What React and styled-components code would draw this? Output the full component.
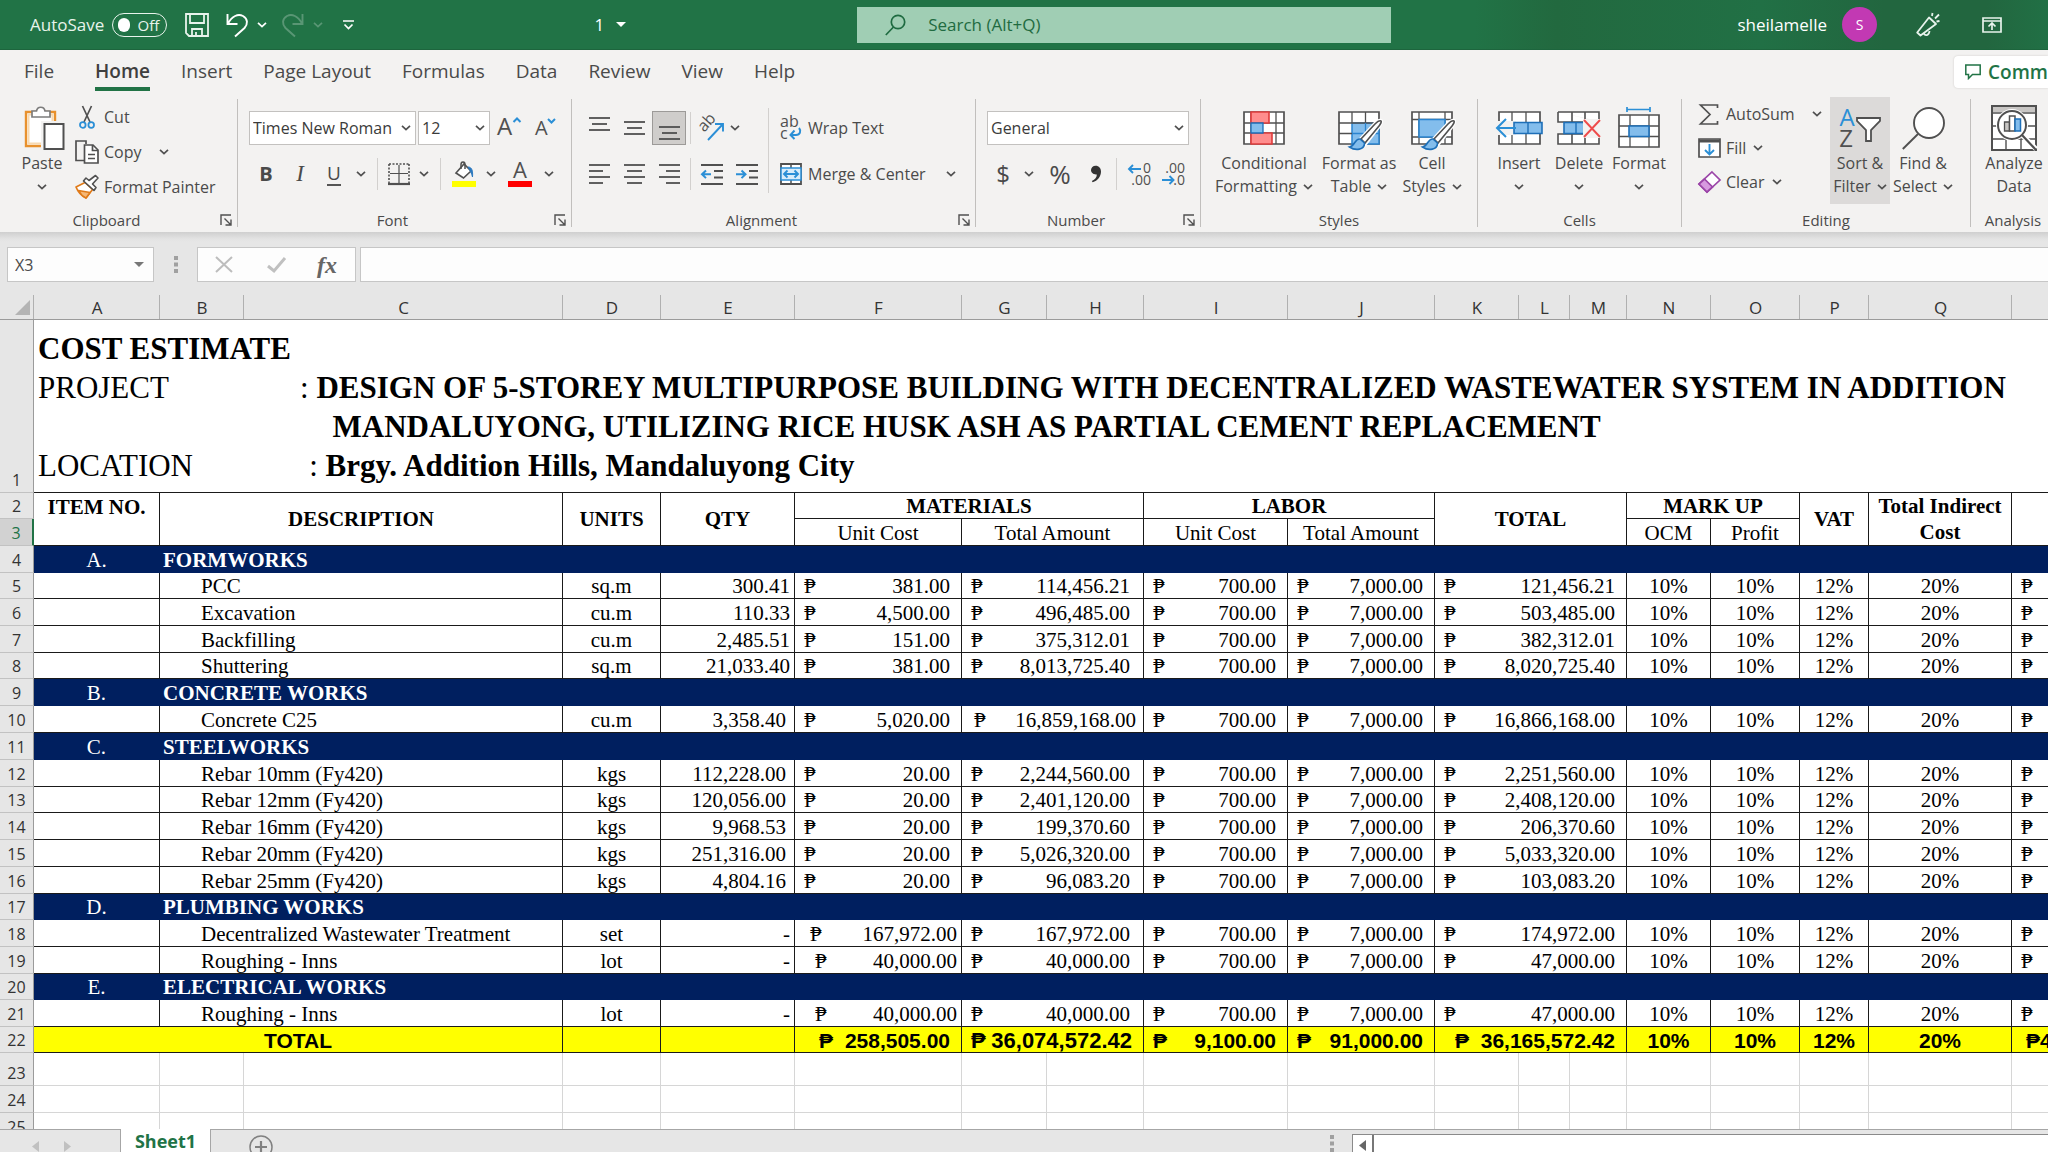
import React from 'react';
import styled, { createGlobalStyle, css } from 'styled-components';

const ui = '"Open Sans", "Noto Sans", sans-serif';
const serif = '"Liberation Serif", "Times New Roman", serif';
const sans = '"Liberation Sans", Arial, sans-serif';

const GlobalStyle = createGlobalStyle`
  *, *::before, *::after { box-sizing: border-box; }
  body { margin: 0; background: #e6e6e6; font-family: ${ui}; color: #4a4a4a; }
  button, input, select { font: inherit; color: inherit; margin: 0; padding: 0; border: 0; background: none; }
  svg { display: block; flex: none; overflow: visible; }
`;

const Page = styled.div`
  display: flex;
  flex-direction: column;
  height: 100vh;
  overflow: hidden;
`;

/* ---------- title bar ---------- */

const TitleBar = styled.header`
  flex: none;
  display: grid;
  grid-template-columns: 42% 26% 1fr;
  align-items: center;
  height: 50px;
  background: linear-gradient(90deg, #217346 72%, #22693f 76%, #217045 86%, #22663f 92%, #22663f 97%, #217045 100%);
  border-bottom: 1px solid #1d653d;
  color: #fff;
  font-size: 17px;
`;

const QuickAccess = styled.div`
  display: flex;
  align-items: center;
  padding-left: 30px;
`;

const SwitchLabel = styled.label`
  display: flex;
  align-items: center;
  gap: 8px;
  color: #e8f3ec;
`;

const Switch = styled.span`
  display: grid;
  align-items: center;
  width: 55px;
  height: 24px;
  border: 1px solid #e8f3ec;
  border-radius: 12px;
  font-size: 15px;
  line-height: 20px;
  > * { grid-area: 1 / 1; }
  span { justify-self: end; padding-right: 7px; }
  input {
    appearance: none;
    width: 12px;
    height: 14px;
    margin-left: 5px;
    border-radius: 7px;
    background: #fff;
  }
`;

const BarButton = styled.button`
  display: flex;
  align-items: center;
  justify-content: center;
  width: ${(p) => p.$w}px;
  height: 36px;
  opacity: ${(p) => (p.$dim ? 0.25 : 1)};
`;

const DocName = styled.button`
  display: flex;
  align-items: center;
  gap: 12px;
  margin-left: auto;
  margin-right: 234px;
`;

const SearchBox = styled.label`
  display: flex;
  align-items: center;
  gap: 22px;
  height: 36px;
  margin: 0 2px 0 -3px;
  padding-left: 28px;
  background: #a0ceb4;
  color: #1f6b41;
  input { flex: 1; min-width: 0; outline: 0; }
  input::placeholder { color: #1f6b41; opacity: 1; }
`;

const Account = styled.div`
  display: flex;
  align-items: center;
  justify-content: flex-end;
  padding-right: 17px;
`;

const UserName = styled.span`
  margin-right: 15px;
`;

const Avatar = styled.span`
  width: 35px;
  height: 35px;
  margin-right: 26px;
  border-radius: 50%;
  background: #c239b3;
  font-size: 14px;
  line-height: 35px;
  text-align: center;
`;

/* ---------- ribbon ---------- */

const TabBar = styled.nav`
  flex: none;
  display: flex;
  align-items: flex-start;
  height: 47px;
  padding-left: 24px;
  background: #f3f2f1;
  font-size: 19px;
  overflow: hidden;
`;

const Tab = styled.button`
  height: 41px;
  padding: 4px 0 0;
  margin-right: ${(p) => (p.$first ? 41 : 31)}px;
  line-height: 33px;
  white-space: nowrap;
  border-bottom: 4px solid transparent;
  ${(p) => p.$active && css`
    font-weight: 600;
    color: #3f3f3f;
    border-bottom-color: #217346;
  `}
`;

const TabText = styled.span`
  display: block;
  padding-top: 2px;
  line-height: 31px;
`;

const Comments = styled.button`
  display: flex;
  flex: none;
  align-items: center;
  gap: 7px;
  width: 94px;
  height: 32px;
  margin-top: 6px;
  margin-left: auto;
  padding-left: 11px;
  border-radius: 4px 0 0 4px;
  background: #fff;
  box-shadow: 0 0 2px #c8c6c4;
  color: #217346;
  font-weight: 600;
  overflow: hidden;
`;

const Ribbon = styled.section`
  flex: none;
  display: flex;
  height: 135px;
  padding-bottom: 5px;
  background: #f3f2f1;
  font-size: 16px;
  overflow: hidden;
`;

const GroupBox = styled.div`
  flex: none;
  display: flex;
  flex-direction: column;
  width: ${(p) => p.$w}px;
`;

const Divider = styled.div`
  flex: none;
  width: 1px;
  margin-top: 2px;
  background: #c1bfbd;
`;

const GroupBody = styled.div`
  flex: 1;
  display: flex;
  align-items: flex-start;
  padding-left: ${(p) => p.$left}px;
`;

const GroupFoot = styled.div`
  display: flex;
  font-size: 15px;
  line-height: 14px;
  text-align: center;
  > span { flex: 1; }
`;

const Launcher = styled.button`
  display: flex;
  align-items: center;
  width: 24px;
  padding-left: 7px;
`;

const Stack = styled.div`
  display: flex;
  flex-direction: column;
  gap: ${(p) => p.$gap || 0}px;
  padding-top: ${(p) => p.$top || 0}px;
  padding-left: ${(p) => p.$left || 0}px;
  width: ${(p) => (p.$w ? p.$w + 'px' : 'auto')};
`;

const Tools = styled.div`
  display: flex;
  align-items: center;
  gap: ${(p) => p.$gap || 0}px;
  height: 34px;
`;

const Tool = styled.button`
  display: flex;
  align-items: center;
  justify-content: center;
  width: ${(p) => p.$w || 34}px;
  height: 34px;
  ${(p) => p.$pressed && css`
    background: #cfcdcb;
    box-shadow: inset 0 0 0 1px #9c9a98;
  `}
`;

const Glyph = styled.span`
  font-family: ${(p) => p.$font || ui};
  font-size: ${(p) => p.$size || 20}px;
  font-weight: ${(p) => p.$weight || 400};
  font-style: ${(p) => (p.$italic ? 'italic' : 'normal')};
  border-bottom: ${(p) => (p.$under ? '2px solid #555' : '0')};
  line-height: 22px;
`;

const Rule = styled.div`
  width: 1px;
  height: ${(p) => p.$h || 32}px;
  margin: ${(p) => p.$top || 0}px ${(p) => p.$m}px 0;
  background: #d2d0ce;
`;

const TextTool = styled.button`
  display: flex;
  align-items: center;
  gap: 5px;
  height: 34px;
  white-space: nowrap;
  > svg { margin-left: ${(p) => p.$push || 2}px; }
`;

const IconSlot = styled.span`
  display: flex;
  justify-content: center;
  width: 24px;
`;

const BigTool = styled.button`
  display: flex;
  flex-direction: column;
  align-items: center;
  width: ${(p) => p.$w}px;
  height: 107px;
  padding-top: 6px;
  line-height: 23px;
  white-space: nowrap;
  background: ${(p) => (p.$hover ? '#dcdad9' : 'none')};
  margin-right: ${(p) => (p.$hover ? 3 : 0)}px;
`;

const BigIcon = styled.span`
  display: flex;
  align-items: center;
  height: 49px;
`;

const BigLine = styled.span`
  display: flex;
  align-items: center;
  gap: 6px;
  height: 23px;
`;

const SelectBox = styled.div`
  display: grid;
  align-items: center;
  width: ${(p) => p.$w}px;
  height: 34px;
  border: 1px solid #c3c1bf;
  background: #fff;
  color: #3b3b3b;
  > * { grid-area: 1 / 1; }
  select { appearance: none; width: 100%; height: 32px; padding-left: 3px; outline: 0; }
  svg { justify-self: end; margin-right: 4px; pointer-events: none; }
`;

/* ---------- formula bar ---------- */

const FormulaBar = styled.section`
  flex: none;
  display: flex;
  height: 51px;
  padding: 15px 0 1px 7px;
  background: linear-gradient(#cfcfcf, #e3e3e3 7px, #e6e6e6 10px);
  font-size: 16px;
`;

const Field = styled.div`
  display: flex;
  align-items: center;
  width: ${(p) => (p.$w ? p.$w + 'px' : 'auto')};
  flex: ${(p) => (p.$w ? 'none' : '1')};
  margin-right: ${(p) => p.$gap || 0}px;
  border: solid #c6c6c6;
  border-width: ${(p) => (p.$open ? '1px 0 1px 1px' : '1px')};
  background: #fdfdfd;
  input { flex: 1; min-width: 0; height: 33px; padding-left: 7px; outline: 0; }
`;

const Grip = styled.div`
  display: flex;
  align-items: center;
  justify-content: center;
  width: 43px;
`;

const FieldButton = styled.button`
  display: flex;
  align-items: center;
  justify-content: center;
  width: ${(p) => p.$w}px;
  height: 33px;
  color: #666;
`;

/* ---------- sheet ---------- */

const SheetArea = styled.main`
  flex: 1;
  min-height: 0;
  overflow: hidden;
  background: #fff;
`;

const Sheet = styled.table`
  width: 100%;
  min-width: 2110px;
  table-layout: fixed;
  border-collapse: separate;
  border-spacing: 0;
  color: #000;
  font-family: ${serif};
  font-size: 21px;
  line-height: 23px;
`;

const SheetRow = styled.tr`
  height: ${(p) => p.$h}px;
`;

const ColHead = styled.th`
  height: 37px;
  padding: 12px 0 0;
  border-bottom: 1px solid #9b9b9b;
  background: linear-gradient(#b0b0b0, #b0b0b0) right bottom / 1px 24px no-repeat #e6e6e6;
  color: #333;
  font-family: ${ui};
  font-size: 17px;
  font-weight: 400;
`;

const Corner = styled(ColHead)`
  vertical-align: bottom;
  svg { margin: 0 0 4px 15px; }
`;

const RowHead = styled.th`
  padding: 0;
  border-right: ${(p) => (p.$on ? '2px solid #217346' : '1px solid #9b9b9b')};
  border-bottom: 1px solid #c2c2c2;
  background: ${(p) => (p.$on ? '#d2d2d2' : '#e6e6e6')};
  color: ${(p) => (p.$on ? '#217346' : '#333')};
  font-family: ${ui};
  font-size: 16px;
  font-weight: 400;
  text-align: center;
  vertical-align: bottom;
`;

const Cell = styled.td`
  padding: 0 ${(p) => p.$r || 0}px 0 ${(p) => p.$l || 0}px;
  border-right: 1px solid #1a1a1a;
  border-bottom: 1px solid #1a1a1a;
  text-align: ${(p) => p.$align || 'center'};
  vertical-align: bottom;
  white-space: nowrap;
  overflow: hidden;
`;

const HeadCell = styled(Cell).attrs({ as: 'th' })`
  padding: ${(p) => (p.$v === 'top' ? 3 : 0)}px 0 0;
  font-weight: ${(p) => (p.$plain ? 400 : 700)};
  vertical-align: ${(p) => p.$v || 'middle'};
  line-height: ${(p) => (p.$tall ? 26 : 23)}px;
`;

const SectionCell = styled(Cell)`
  border-color: #001f5f;
  background: #001f5f;
  color: #fff;
  font-weight: ${(p) => (p.$bold ? 700 : 400)};
`;

const TotalCell = styled(Cell)`
  background: #ff0;
  font-family: ${sans};
  font-size: ${(p) => (p.$big ? 22 : 21)}px;
  font-weight: 700;
`;

const BlankCell = styled.td`
  padding: 0;
  border-right: 1px solid #d6d6d6;
  border-bottom: 1px solid #d6d6d6;
`;

const TitleCell = styled(Cell)`
  padding: 9px 0 0 4px;
  text-align: left;
  vertical-align: top;
  font-size: 31px;
  line-height: 39px;
`;

const TitleLine = styled.div`
  white-space: pre;
`;

const Money = styled.div`
  display: flex;
  justify-content: space-between;
`;

/* ---------- bottom bar ---------- */

const BottomBar = styled.footer`
  flex: none;
  display: flex;
  align-items: flex-start;
  height: 23px;
  border-top: 1px solid #a6a6a6;
  background: #e6e6e6;
`;

const SheetNav = styled.div`
  display: flex;
  width: 120px;
  height: 22px;
  gap: 24px;
  padding: 10px 0 0 32px;
  button { width: 8px; height: 12px; }
`;

const SheetTab = styled.button`
  width: 91px;
  height: 23px;
  margin-top: -1px;
  border: solid #a6a6a6;
  border-width: 0 1px;
  background: #fff;
  color: #217346;
  font-size: 18px;
  font-weight: 700;
  line-height: 22px;
`;

const AddSheet = styled.button`
  margin: 5px 0 0 38px;
  height: 17px;
  overflow: hidden;
`;

const ScrollGrip = styled.div`
  margin-left: auto;
  padding-top: 5px;
`;

const ScrollBar = styled.div`
  display: flex;
  width: 34%;
  height: 18px;
  margin: 4px 0 0 18px;
  border: solid #8a8a8a;
  border-width: 1px 0 0 1px;
  background: #fff;
  button {
    width: 21px;
    border-right: 2px solid #777;
    padding: 5px 0 0 6px;
    display: flex;
  }
`;

/* ---------- icons ---------- */

const G = '#505050';
const B = '#2b8fd6';

const Chevron = ({ color = G }) => (
  <svg width="10" height="6" viewBox="0 0 10 6" fill="none" stroke={color} strokeWidth="1.7"><path d="M1 .8 5 4.6 9 .8" /></svg>
);

const Drop = ({ w = 20, label }) => (
  <Tool $w={w} aria-label={label}><Chevron /></Tool>
);

const SaveIcon = () => (
  <svg width="24" height="24" viewBox="0 0 24 24" fill="none" stroke="#e8f3ec" strokeWidth="1.8">
    <path d="M1 1h22v22H4l-3-3zM5 1v9h14V1M7 23v-7h10v7M11 19v4" />
  </svg>
);

const UndoIcon = ({ flip }) => (
  <svg width="22" height="24" viewBox="0 0 22 24" fill="none" stroke="#fff" strokeWidth="1.9">
    <g transform={flip ? 'matrix(-1 0 0 1 22 0)' : undefined}>
      <path d="M1.5 1v10h10M2 10.5C6 3 12 .5 17 3c5 3 5 8 1.500 12L9 23.500" />
    </g>
  </svg>
);

const MoreIcon = () => (
  <svg width="11" height="10" viewBox="0 0 11 10" fill="none" stroke="#fff" strokeWidth="1.7"><path d="M0 1h11M1.500 4.500l4 4 4-4" /></svg>
);

const SearchIcon = () => (
  <svg width="21" height="22" viewBox="0 0 21 22" fill="none" stroke="#1f6b41" strokeWidth="1.700"><circle cx="13" cy="8" r="6.700" /><path d="M8.500 13 .8 21" /></svg>
);

const MegaphoneIcon = () => (
  <svg width="24" height="24" viewBox="0 0 24 24" fill="none" stroke="#e8f3ec" strokeWidth="1.800" strokeLinejoin="round">
    <path d="M13 4.500 1.200 19.500 4.500 22.500 20 11zM1.200 19.500l3.300 3M8 20.500c1 2.500 5 2.500 5.500-2.500M16 3l.5-3M19 5.500l4-4M20.500 8.500l3-.5" />
  </svg>
);

const RibbonModeIcon = () => (
  <svg width="20" height="16" viewBox="0 0 20 16" fill="none" stroke="#e8f3ec" strokeWidth="1.700">
    <path d="M1 1h18v14H1zM1 4h18M10 13V6.500M6.500 9.500 10 6l3.500 3.500" />
  </svg>
);

const CommentIcon = () => (
  <svg width="16" height="16" viewBox="0 0 16 16" fill="none" stroke="#217346" strokeWidth="1.500"><path d="M.8 1h14.400v9.500H7.500L3.500 14.500v-4H.8z" /></svg>
);

const LaunchIcon = () => (
  <svg width="12" height="12" viewBox="0 0 12 12" fill="none" stroke={G} strokeWidth="1.400"><path d="M1 11V1h10M4.500 4.500 11 11M11 5.500V11H5.500" /></svg>
);

const PasteIcon = () => (
  <svg width="48" height="44" viewBox="-6 0 48 44" fill="none">
    <path d="M2 6h29v34H2z" fill="#fff" stroke="#e8912d" strokeWidth="2.400" />
    <path d="M4.500 8.500h24v29h-24z" stroke="#f8d9b0" strokeWidth="2" />
    <path d="M8 11V5h4.500c1-5 7.500-5 8.500 0H26v6z" fill="#fff" stroke="#7c7c7c" strokeWidth="1.700" />
    <path d="M17 15h24v29H17z" fill="#f3f2f1" />
    <path d="M20.500 18h19v25h-19z" fill="#fff" stroke="#505050" strokeWidth="2" />
  </svg>
);

const CutIcon = () => (
  <svg width="16" height="23" viewBox="0 0 16 23" fill="none">
    <path d="M3.500 0 11 16M12.500 0 5 16" stroke={G} strokeWidth="1.700" />
    <circle cx="3.800" cy="19" r="2.800" stroke={B} strokeWidth="1.800" /><circle cx="12.200" cy="19" r="2.800" stroke={B} strokeWidth="1.800" />
  </svg>
);

const CopyIcon = () => (
  <svg width="24" height="24" viewBox="0 0 24 24" fill="none" stroke={G} strokeWidth="1.700">
    <path d="M9 20.500H1V1h10v3" /><path d="M9.500 5H18l5 5v13H9.500z" fill="#fff" /><path d="M17.500 5v5.500H23M13 14.500h7M13 18.500h7" />
  </svg>
);

const PainterIcon = () => (
  <svg width="24" height="24" viewBox="0 0 24 24" fill="none" strokeLinejoin="round">
    <path d="M1 12 10 7.500l7.500 7L11 23C6.500 21 3 17 1 12z" fill="#fff" stroke="#e07b1a" strokeWidth="1.700" />
    <path d="M3.500 15.500 15 17.500 11 23C8 21.500 5.500 19 3.500 15.500z" fill="#f5b877" stroke="#e07b1a" strokeWidth="1.500" />
    <path d="m8.500 6 10.500 9.500 2-3-3.500-3.500L23 3l-2.500-2.500-6.500 5L11 3z" fill="#fff" stroke={G} strokeWidth="1.600" />
  </svg>
);

const GrowIcon = ({ shrink }) => (
  <svg width="24" height="24" viewBox="0 0 24 24">
    <text x={shrink ? 2 : 0} y="19" fontFamily={ui} fontSize={shrink ? 20 : 24} fill={G}>A</text>
    <path d={shrink ? 'M15 3l3.500 3.500L22 3' : 'M16.500 6 20 2.500 23.500 6'} fill="none" stroke={B} strokeWidth="2" />
  </svg>
);

const BorderIcon = () => (
  <svg width="22" height="22" viewBox="0 0 22 22" fill="none" stroke={G}>
    <path d="M1 1h20M1 1v19M21 1v19" strokeWidth="1.600" strokeDasharray="2 1.500" />
    <path d="M11 2v18M2 10.500h18" strokeWidth="1.200" /><path d="M0 21h22" strokeWidth="2.200" />
  </svg>
);

const FillColorIcon = () => (
  <svg width="24" height="26" viewBox="0 0 24 26" fill="none">
    <path d="m4 12 8-9 7 7-7.500 7z" fill="#fff" stroke={G} strokeWidth="1.600" /><path d="M9 8V3.500C9 0 13 0 13 3.500V8" stroke={G} strokeWidth="1.500" />
    <path d="M16 6c4 0 5 4 4.500 10-1-4-2-6-4.500-10z" fill="#2a78bf" stroke="#2a78bf" /><path d="M0 20h24v6H0z" fill="#ff0" />
  </svg>
);

const FontColorIcon = () => (
  <svg width="24" height="26" viewBox="0 0 24 26"><text x="12" y="17" textAnchor="middle" fontFamily={ui} fontSize="22" fill={G}>A</text><path d="M0 20h24v6H0z" fill="#f00" /></svg>
);

const Lines = ({ rows, y = 0, step = 6 }) => (
  <svg width="21" height="22" viewBox="0 0 21 22" stroke={G} strokeWidth="1.800">
    {rows.map(([a, b], i) => <path key={i} d={`M${a} ${y + 2 + i * step}H${b}`} />)}
  </svg>
);

const IndentIcon = ({ dir }) => (
  <svg width="22" height="21" viewBox="0 0 22 21" fill="none" stroke={G} strokeWidth="1.800">
    <path d="M0 1h22M13 7h9M13 13.500h9M0 20h22" />
    <path d={dir === 'in' ? 'M0 10.300h9M5.500 6.500l4 3.800-4 3.800' : 'M1 10.300h9M5 6.500l-4 3.800 4 3.800'} stroke={B} strokeWidth="2" />
  </svg>
);

const OrientIcon = () => (
  <svg width="24" height="26" viewBox="0 0 24 26">
    <text x="2" y="17" transform="rotate(-48 4 15)" fontFamily={ui} fontSize="16" fill={G}>ab</text>
    <path d="M8 25 22.500 9.500M15 9h8v7.500" fill="none" stroke={B} strokeWidth="1.900" />
  </svg>
);

const WrapIcon = () => (
  <svg width="22" height="24" viewBox="0 0 22 24">
    <text x="0" y="11" fontFamily={ui} fontSize="16" fill={G}>ab</text><text x="0" y="23" fontFamily={ui} fontSize="16" fill={G}>c</text>
    <path d="M19 12c2.500 3 1 7-3 7h-5M14.500 14.500 10.500 19l4 4" fill="none" stroke={B} strokeWidth="2" />
  </svg>
);

const MergeIcon = () => (
  <svg width="22" height="22" viewBox="0 0 22 22" fill="none">
    <path d="M1 1h20v20H1z" fill="#fff" stroke={G} strokeWidth="1.800" /><path d="M11 1v4M11 17v4" stroke={G} strokeWidth="1.500" />
    <path d="M1 5h20v12H1z" fill="#d9ecfa" stroke={B} strokeWidth="1.500" /><path d="M4 11h14M7.500 7.500 4 11l3.500 3.500M14.500 7.500 18 11l-3.500 3.500" stroke={B} strokeWidth="1.900" />
  </svg>
);

const CommaIcon = () => (
  <svg width="10" height="18" viewBox="0 0 12 20" fill="#333"><path d="M5.500 0C9.500 0 12 3 12 7c0 6-4 11-10 13l-1-1.500C5 16.500 7 14 7 10.500 3 11 0 8.500 0 5.300 0 2.200 2.500 0 5.500 0z" /></svg>
);

const DecimalIcon = ({ less }) => (
  <svg width="23" height="24" viewBox="0 0 23 24" fill="none">
    <text x="23" y="11" textAnchor="end" fontFamily={ui} fontSize="14" fill={G}>{less ? '.00' : '0'}</text>
    <text x="23" y="23" textAnchor="end" fontFamily={ui} fontSize="14" fill={G}>{less ? '.0' : '.00'}</text>
    <path d={less ? 'M0 18h11M7.500 14l4 4-4 4' : 'M1 7h12M5 3 1 7l4 4'} stroke={B} strokeWidth="1.900" />
  </svg>
);

const BLUE = '#83bdec';
const Brush = () => (
  <g>
    <path d="M43 10c-2-1-4 1-6 3L23 28l4 5 14-18c2-3 3-4 2-5z" fill="#fff" stroke="#fff" strokeWidth="4" />
    <path d="M43 10c-2-1-4 1-6 3L23 28l4 4 14-17c2-3 3-4 2-5z" fill="#fff" stroke={G} strokeWidth="1.600" />
    <path d="M22 28c-5-1-5 7-10.500 8 6 4 15 3 15-4z" fill={BLUE} stroke="#1d6fb8" strokeWidth="1.600" />
  </g>
);

const CondIcon = () => (
  <svg width="42" height="34" viewBox="0 0 42 34" fill="none">
    <path d="M1 1h40v32H1z" fill="#fff" stroke={G} strokeWidth="1.700" /><path d="M8 1v32M33 1v32M1 12h40M1 22h40" stroke={G} strokeWidth="1.300" />
    <path d="M8 1h18v11H8zM8 22h21v11H8z" fill="#ff8d8d" stroke="#e03c3c" strokeWidth="1.600" /><path d="M8 12h12v10H8z" fill={BLUE} stroke="#1d6fb8" strokeWidth="1.300" />
  </svg>
);

const TableIcon = () => (
  <svg width="42" height="34" viewBox="0 0 42 34" fill="none">
    <path d="M1 1h40v32H1z" fill="#fff" stroke={G} strokeWidth="1.700" /><path d="M14 12h27v21H14z" fill={BLUE} />
    <path d="M14 12v21h27V12z" stroke="#2a84cf" strokeWidth="1.500" /><path d="M14 1v11M27.500 1v11M1 12h40M1 22.500h13" stroke={G} strokeWidth="1.300" /><path d="M27.500 12v21M14 22.500h27" stroke="#2a84cf" strokeWidth="1.300" />
    <Brush />
  </svg>
);

const CellIcon = () => (
  <svg width="42" height="34" viewBox="0 0 42 34" fill="none">
    <path d="M1 1h40v32H1z" fill="#fff" stroke={G} strokeWidth="1.700" /><path d="M8 1v32M34 1v32M1 8.500h40M1 26h40" stroke={G} strokeWidth="1.300" />
    <path d="M8 8.500h26V26H8z" fill={BLUE} stroke="#2a84cf" strokeWidth="1.600" /><Brush />
  </svg>
);

const InsertIcon = () => (
  <svg width="46" height="34" viewBox="0 0 46 34" fill="none">
    <path d="M3 1h41v32H3z" fill="#fff" stroke={G} strokeWidth="1.700" /><path d="M16 1v32M30 1v32" stroke={G} strokeWidth="1.300" />
    <path d="M0 10h20v14H0z" fill="#f3f2f1" /><path d="M18 11.500h28v11H18z" fill={BLUE} stroke="#1d6fb8" strokeWidth="1.600" /><path d="M32 11.500v11" stroke="#1d6fb8" strokeWidth="1.400" />
    <path d="M1 17h19M10 8 1 17l9 9" stroke={B} strokeWidth="2" />
  </svg>
);

const DeleteIcon = () => (
  <svg width="44" height="34" viewBox="0 0 44 34" fill="none">
    <path d="M1 1h41v9M1 1v10h41M1 33V23h41v10zM15 1v10M28 1v10M15 23v10M28 23v10" fill="#fff" stroke={G} strokeWidth="1.600" />
    <path d="M7 11.500h22v11H7z" fill={BLUE} stroke="#1d6fb8" strokeWidth="1.600" /><path d="M19 11.500v11" stroke="#1d6fb8" strokeWidth="1.400" />
    <path d="M26 8h18v19H26z" fill="#f3f2f1" /><path d="m27 9 16 17M43 9 27 26" stroke="#ee4b4b" strokeWidth="1.900" />
  </svg>
);

const FormatIcon = () => (
  <svg width="42" height="42" viewBox="0 0 42 42" fill="none">
    <path d="M9 0v5M32 0v5M9 2.500h23" stroke={B} strokeWidth="1.700" />
    <path d="M1 8h40v32H1z" fill="#fff" stroke={G} strokeWidth="1.700" /><path d="M12 8v32M31 8v32M1 19h40M1 29.500h40" stroke={G} strokeWidth="1.300" />
    <path d="M11 19h20v10.500H11z" fill={BLUE} stroke="#1d6fb8" strokeWidth="1.600" />
  </svg>
);

const SigmaIcon = () => (
  <svg width="20" height="21" viewBox="0 0 20 21" fill="none" stroke={G} strokeWidth="1.700"><path d="M18.500 4V1H1.500L11 10.500 1.500 20h17v-3" /></svg>
);

const FillIcon = () => (
  <svg width="23" height="20" viewBox="0 0 23 20" fill="none"><path d="M1 1h21v18H1z" fill="#fff" stroke={G} strokeWidth="1.700" /><path d="M1 3h21" stroke={G} strokeWidth="3" /><path d="M11.500 6v10.500M7 12l4.500 4.500L16 12" stroke={B} strokeWidth="1.900" /></svg>
);

const EraserIcon = () => (
  <svg width="23" height="22" viewBox="0 0 23 22" fill="none" stroke="#9b45a8" strokeWidth="1.700"><path d="M14 1 22 9 9 21 1 13z" fill="#fff" /><path d="m6.500 8 8 8L9 21 1 13z" fill="#d79ae0" /></svg>
);

const SortIcon = () => (
  <svg width="42" height="44" viewBox="0 0 42 44" fill="none">
    <text x="8" y="20" textAnchor="middle" fontFamily={ui} fontSize="24" fill={B}>A</text>
    <text x="7" y="41" textAnchor="middle" fontFamily={ui} fontSize="24" fill={G}>Z</text>
    <path d="M18 12h23v3l-9 9v11h-5V24l-9-9z" fill="#fff" stroke={G} strokeWidth="1.800" />
  </svg>
);

const FindIcon = () => (
  <svg width="43" height="44" viewBox="0 0 43 44" fill="none" stroke={G} strokeWidth="1.900"><circle cx="27" cy="17" r="15" fill="#fff" /><path d="M16 28 .8 43" /></svg>
);

const AnalyzeIcon = () => (
  <svg width="46" height="46" viewBox="0 0 46 46" fill="none">
    <path d="M1 1h44v44H1z" fill="#fff" stroke={G} strokeWidth="2" /><path d="M2 2h42v5H2z" fill="#c8c6c4" />
    <path d="M1 8h44M1 21h44M1 34h44M15 34v11M30 34v11" stroke={G} strokeWidth="1.400" />
    <circle cx="21" cy="20" r="16" fill="#fff" /><path d="m32 31 13 13" stroke="#fff" strokeWidth="5" />
    <circle cx="21" cy="20" r="14" fill="#fff" stroke={G} strokeWidth="2" /><path d="m31 30 14 15" stroke={G} strokeWidth="2.200" />
    <path d="M13.500 17h5v9h-5z" fill="#c8c6c4" stroke={G} strokeWidth="1.300" /><path d="M18.500 11h5.500v15h-5.500z" fill="#fff" stroke={G} strokeWidth="1.500" /><path d="M24 14h5.500v12H24z" fill={BLUE} stroke="#1d6fb8" strokeWidth="1.500" />
  </svg>
);

const Dots = () => (
  <svg width="4" height="17" viewBox="0 0 4 17" fill="#a0a0a0"><path d="M0 0h4v4H0zM0 6.500h4v4H0zM0 13h4v4H0z" /></svg>
);

const Triangle = ({ dir, color }) => {
  const d = { down: 'M0 0h10L5 5z', left: 'M7 0v11L0 5.500z', right: 'M0 0v11l7-5.500z' }[dir];
  return <svg width={dir === 'down' ? 10 : 8} height={dir === 'down' ? 5 : 11} fill={color}><path d={d} /></svg>;
};

/* ---------- ribbon parts ---------- */

const Group = ({ w, label, left, launcher, children }) => (
  <>
    <GroupBox $w={w} role="group" aria-label={label}>
      <GroupBody $left={left}>{children}</GroupBody>
      <GroupFoot><span>{label}</span>{launcher && <Launcher aria-label={`${label} settings`}><LaunchIcon /></Launcher>}</GroupFoot>
    </GroupBox>
    <Divider />
  </>
);

const Big = ({ w, icon, top, bottom, drop, hover }) => (
  <BigTool $w={w} $hover={hover}>
    <BigIcon>{icon}</BigIcon>
    <BigLine>{top}</BigLine>
    <BigLine>{bottom}{drop && <Chevron />}</BigLine>
  </BigTool>
);

const Select = ({ w, label, value }) => (
  <SelectBox $w={w}>
    <select aria-label={label} defaultValue={value}><option>{value}</option></select>
    <Chevron />
  </SelectBox>
);

const TABS = ['File', 'Home', 'Insert', 'Page Layout', 'Formulas', 'Data', 'Review', 'View', 'Help'];

/* ---------- sheet data ---------- */

const COLUMNS = [
  ['A', 126], ['B', 84], ['C', 319], ['D', 98], ['E', 134], ['F', 167], ['G', 85], ['H', 97], ['I', 144],
  ['J', 147], ['K', 84], ['L', 51], ['M', 57], ['N', 84], ['O', 89], ['P', 69], ['Q', 143],
];

const item = (n, h, name, unit, qty, cost, amount, total, extra = {}) => ({ n, h, name, unit, qty, cost, amount, total, ...extra });
const section = (n, h, letter, title) => ({ n, h, letter, title });

const ROWS = [
  section(4, 27, 'A.', 'FORMWORKS'),
  item(5, 26, 'PCC', 'sq.m', '300.41', '381.00', '114,456.21', '121,456.21'),
  item(6, 27, 'Excavation', 'cu.m', '110.33', '4,500.00', '496,485.00', '503,485.00'),
  item(7, 27, 'Backfilling', 'cu.m', '2,485.51', '151.00', '375,312.01', '382,312.01'),
  item(8, 26, 'Shuttering', 'sq.m', '21,033.40', '381.00', '8,013,725.40', '8,020,725.40'),
  section(9, 27, 'B.', 'CONCRETE WORKS'),
  item(10, 27, 'Concrete C25', 'cu.m', '3,358.40', '5,020.00', '16,859,168.00', '16,866,168.00', { qtyPad: 8, amountPad: [12, 7] }),
  section(11, 27, 'C.', 'STEELWORKS'),
  item(12, 27, 'Rebar 10mm (Fy420)', 'kgs', '112,228.00', '20.00', '2,244,560.00', '2,251,560.00', { qtyPad: 8 }),
  item(13, 26, 'Rebar 12mm (Fy420)', 'kgs', '120,056.00', '20.00', '2,401,120.00', '2,408,120.00', { qtyPad: 8 }),
  item(14, 27, 'Rebar 16mm (Fy420)', 'kgs', '9,968.53', '20.00', '199,370.60', '206,370.60', { qtyPad: 8 }),
  item(15, 27, 'Rebar 20mm (Fy420)', 'kgs', '251,316.00', '20.00', '5,026,320.00', '5,033,320.00', { qtyPad: 8 }),
  item(16, 27, 'Rebar 25mm (Fy420)', 'kgs', '4,804.16', '20.00', '96,083.20', '103,083.20', { qtyPad: 8 }),
  section(17, 26, 'D.', 'PLUMBING WORKS'),
  item(18, 27, 'Decentralized Wastewater Treatment', 'set', '-', '167,972.00', '167,972.00', '174,972.00', { costPad: [15, 4] }),
  item(19, 27, 'Roughing - Inns', 'lot', '-', '40,000.00', '40,000.00', '47,000.00', { costPad: [20, 4] }),
  section(20, 26, 'E.', 'ELECTRICAL WORKS'),
  item(21, 27, 'Roughing - Inns', 'lot', '-', '40,000.00', '40,000.00', '47,000.00', { costPad: [20, 4] }),
];

const Peso = ({ as: Box = Cell, pad = [9, 11], span, big, children }) => (
  <Box colSpan={span} $l={pad[0]} $r={pad[1]} $big={big}>
    <Money><span>₱</span><span>{children}</span></Money>
  </Box>
);

const SectionRow = ({ row }) => (
  <SheetRow $h={row.h}>
    <RowHead scope="row">{row.n}</RowHead>
    <SectionCell>{row.letter}</SectionCell>
    <SectionCell colSpan={17} $bold $align="left" $l={3}>{row.title}</SectionCell>
  </SheetRow>
);

const ItemRow = ({ row }) => (
  <SheetRow $h={row.h}>
    <RowHead scope="row">{row.n}</RowHead>
    <Cell />
    <Cell colSpan={2} $align="left" $l={41}>{row.name}</Cell>
    <Cell>{row.unit}</Cell>
    <Cell $align="right" $r={row.qtyPad || 4}>{row.qty}</Cell>
    <Peso pad={row.costPad}>{row.cost}</Peso>
    <Peso span={2} pad={row.amountPad || [9, 13]}>{row.amount}</Peso>
    <Peso>700.00</Peso>
    <Peso>7,000.00</Peso>
    <Peso span={3}>{row.total}</Peso>
    <Cell>10%</Cell>
    <Cell>10%</Cell>
    <Cell>12%</Cell>
    <Cell>20%</Cell>
    <Peso />
  </SheetRow>
);

const Worksheet = () => (
  <Sheet>
    <colgroup>
      <col width="34" />
      {COLUMNS.map(([c, w]) => <col key={c} width={w} />)}
      <col />
    </colgroup>
    <thead>
      <tr>
        <Corner aria-label="Select all"><svg width="15" height="15" fill="#b4b4b4"><path d="M15 0v15H0z" /></svg></Corner>
        {COLUMNS.map(([c]) => <ColHead key={c} scope="col">{c}</ColHead>)}
        <ColHead />
      </tr>
    </thead>
    <tbody>
      <SheetRow $h={173}>
        <RowHead scope="row">1</RowHead>
        <TitleCell colSpan={18}>
          <TitleLine><b>COST ESTIMATE</b></TitleLine>
          <TitleLine>{'PROJECT' + ' '.repeat(17) + ': '}<b>DESIGN OF 5-STOREY MULTIPURPOSE BUILDING WITH DECENTRALIZED WASTEWATER SYSTEM IN ADDITION</b></TitleLine>
          <TitleLine>{' '.repeat(38)}<b>MANDALUYONG, UTILIZING RICE HUSK ASH AS PARTIAL CEMENT REPLACEMENT</b></TitleLine>
          <TitleLine>{'LOCATION' + ' '.repeat(15) + ': '}<b>Brgy. Addition Hills, Mandaluyong City</b></TitleLine>
        </TitleCell>
      </SheetRow>
      <SheetRow $h={26}>
        <RowHead scope="row">2</RowHead>
        <HeadCell rowSpan={2} $v="top">ITEM NO.</HeadCell>
        <HeadCell rowSpan={2} colSpan={2}>DESCRIPTION</HeadCell>
        <HeadCell rowSpan={2}>UNITS</HeadCell>
        <HeadCell rowSpan={2}>QTY</HeadCell>
        <HeadCell colSpan={3} $v="bottom">MATERIALS</HeadCell>
        <HeadCell colSpan={2} $v="bottom">LABOR</HeadCell>
        <HeadCell rowSpan={2} colSpan={3}>TOTAL</HeadCell>
        <HeadCell colSpan={2} $v="bottom">MARK UP</HeadCell>
        <HeadCell rowSpan={2}>VAT</HeadCell>
        <HeadCell rowSpan={2} $tall>Total Indirect<br />Cost</HeadCell>
        <HeadCell rowSpan={2} />
      </SheetRow>
      <SheetRow $h={27}>
        <RowHead scope="row" $on>3</RowHead>
        <HeadCell $plain $v="bottom">Unit Cost</HeadCell>
        <HeadCell $plain $v="bottom" colSpan={2}>Total Amount</HeadCell>
        <HeadCell $plain $v="bottom">Unit Cost</HeadCell>
        <HeadCell $plain $v="bottom">Total Amount</HeadCell>
        <HeadCell $plain $v="bottom">OCM</HeadCell>
        <HeadCell $plain $v="bottom">Profit</HeadCell>
      </SheetRow>
      {ROWS.map((row) => (row.letter ? <SectionRow key={row.n} row={row} /> : <ItemRow key={row.n} row={row} />))}
      <SheetRow $h={26}>
        <RowHead scope="row">22</RowHead>
        <TotalCell colSpan={3}>TOTAL</TotalCell>
        <TotalCell />
        <TotalCell />
        <Peso as={TotalCell} pad={[24, 11]}>258,505.00</Peso>
        <Peso as={TotalCell} span={2} pad={[9, 11]} big>36,074,572.42</Peso>
        <Peso as={TotalCell}>9,100.00</Peso>
        <Peso as={TotalCell}>91,000.00</Peso>
        <Peso as={TotalCell} span={3} pad={[20, 11]}>36,165,572.42</Peso>
        <TotalCell>10%</TotalCell>
        <TotalCell>10%</TotalCell>
        <TotalCell>12%</TotalCell>
        <TotalCell>20%</TotalCell>
        <TotalCell $align="left" $l={14}>₱4</TotalCell>
      </SheetRow>
      {[[23, 33], [24, 27], [25, 27]].map(([n, h]) => (
        <SheetRow key={n} $h={h}>
          <RowHead scope="row">{n}</RowHead>
          {COLUMNS.map(([c]) => <BlankCell key={c} />)}
          <BlankCell />
        </SheetRow>
      ))}
    </tbody>
  </Sheet>
);

const L = [0, 21];
const S = [3, 18];

export default function App() {
  return (
    <Page>
      <GlobalStyle />
      <TitleBar>
        <QuickAccess>
          <SwitchLabel>AutoSave<Switch><input type="checkbox" role="switch" /><span>Off</span></Switch></SwitchLabel>
          <BarButton $w={60} aria-label="Save"><SaveIcon /></BarButton>
          <BarButton $w={20} aria-label="Undo"><UndoIcon /></BarButton>
          <BarButton $w={30} aria-label="Undo history"><Chevron color="#fff" /></BarButton>
          <BarButton $w={32} $dim aria-label="Redo"><UndoIcon flip /></BarButton>
          <BarButton $w={18} $dim aria-label="Redo history"><Chevron color="#fff" /></BarButton>
          <BarButton $w={42} aria-label="Customize toolbar"><MoreIcon /></BarButton>
          <DocName>1<Triangle dir="down" color="#fff" /></DocName>
        </QuickAccess>
        <SearchBox><SearchIcon /><input type="search" aria-label="Search" placeholder="Search (Alt+Q)" /></SearchBox>
        <Account>
          <UserName>sheilamelle</UserName>
          <Avatar>S</Avatar>
          <BarButton $w={50} aria-label="What's new"><MegaphoneIcon /></BarButton>
          <BarButton $w={78} aria-label="Ribbon display options"><RibbonModeIcon /></BarButton>
        </Account>
      </TitleBar>

      <TabBar>
        {TABS.map((t, i) => <Tab key={t} $first={i === 0} $active={t === 'Home'}><TabText>{t}</TabText></Tab>)}
        <Comments><CommentIcon />Comments</Comments>
      </TabBar>

      <Ribbon>
        <Group w={237} label="Clipboard" left={9} launcher>
          <Big w={66} icon={<PasteIcon />} top="Paste" drop />
          <Stack $top={3} $gap={1}>
            <TextTool><IconSlot><CutIcon /></IconSlot>Cut</TextTool>
            <TextTool $push={12}><IconSlot><CopyIcon /></IconSlot>Copy<Chevron /></TextTool>
            <TextTool><IconSlot><PainterIcon /></IconSlot>Format Painter</TextTool>
          </Stack>
        </Group>
        <Group w={333} label="Font" left={11} launcher>
          <Stack $top={14} $gap={12}>
            <Tools $gap={2}>
              <Select w={167} label="Font" value="Times New Roman" />
              <Select w={72} label="Font size" value="12" />
              <Tool aria-label="Increase font size"><GrowIcon /></Tool>
              <Tool aria-label="Decrease font size"><GrowIcon shrink /></Tool>
            </Tools>
            <Tools>
              <Tool><Glyph $weight={700}>B</Glyph></Tool>
              <Tool><Glyph $font={serif} $italic $size={23}>I</Glyph></Tool>
              <Tool><Glyph $under $size={19}>U</Glyph></Tool>
              <Drop label="Underline options" />
              <Rule $m={6} />
              <Tool $w={30} aria-label="Borders"><BorderIcon /></Tool>
              <Drop label="Border options" />
              <Rule $m={6} />
              <Tool aria-label="Fill color"><FillColorIcon /></Tool>
              <Drop label="Fill color options" />
              <Tool $w={38} aria-label="Font color"><FontColorIcon /></Tool>
              <Drop label="Font color options" />
            </Tools>
          </Stack>
        </Group>
        <Group w={403} label="Alignment" left={10} launcher>
          <Stack $top={14} $gap={12}>
            <Tools $gap={1}>
              <Tool aria-label="Top align"><Lines rows={[L, S, L]} y={-1} /></Tool>
              <Tool aria-label="Middle align"><Lines rows={[L, S, L]} y={3} /></Tool>
              <Tool $pressed aria-label="Bottom align"><Lines rows={[L, S, L]} y={8} /></Tool>
              <Rule $m={3} />
              <Tool aria-label="Orientation"><OrientIcon /></Tool>
              <Drop w={10} label="Orientation options" />
            </Tools>
            <Tools $gap={1}>
              <Tool aria-label="Align left"><Lines rows={[L, [0, 14], L, [0, 14]]} /></Tool>
              <Tool aria-label="Center"><Lines rows={[L, S, L, S]} /></Tool>
              <Tool aria-label="Align right"><Lines rows={[L, [7, 21], L, [7, 21]]} /></Tool>
              <Rule $m={3} />
              <Tool aria-label="Decrease indent"><IndentIcon dir="out" /></Tool>
              <Tool aria-label="Increase indent"><IndentIcon dir="in" /></Tool>
            </Tools>
          </Stack>
          <Rule $m={4} $h={85} $top={11} />
          <Stack $top={14} $gap={12} $left={6}>
            <TextTool><IconSlot><WrapIcon /></IconSlot>Wrap Text</TextTool>
            <TextTool $push={15}><IconSlot><MergeIcon /></IconSlot>Merge &amp; Center<Chevron /></TextTool>
          </Stack>
        </Group>
        <Group w={224} label="Number" left={11} launcher>
          <Stack $top={14} $gap={12}>
            <Select w={202} label="Number format" value="General" />
            <Tools>
              <Tool $w={32}><Glyph $size={24}>$</Glyph></Tool>
              <Drop label="Currency options" />
              <Tool $w={42}><Glyph $size={26}>%</Glyph></Tool>
              <Tool $w={30} aria-label="Comma style"><CommaIcon /></Tool>
              <Rule $m={5} />
              <Tool aria-label="Increase decimal"><DecimalIcon /></Tool>
              <Tool aria-label="Decrease decimal"><DecimalIcon less /></Tool>
            </Tools>
          </Stack>
        </Group>
        <Group w={276} label="Styles" left={7}>
          <Big w={112} icon={<CondIcon />} top="Conditional" bottom="Formatting" drop />
          <Big w={78} icon={<TableIcon />} top="Format as" bottom="Table" drop />
          <Big w={68} icon={<CellIcon />} top="Cell" bottom="Styles" drop />
        </Group>
        <Group w={203} label="Cells" left={11}>
          <Big w={60} icon={<InsertIcon />} top="Insert" drop />
          <Big w={60} icon={<DeleteIcon />} top="Delete" drop />
          <Big w={60} icon={<FormatIcon />} top="Format" drop />
        </Group>
        <Group w={288} label="Editing" left={15}>
          <Stack $w={133}>
            <TextTool $push={12}><IconSlot><SigmaIcon /></IconSlot>AutoSum<Chevron /></TextTool>
            <TextTool><IconSlot><FillIcon /></IconSlot>Fill<Chevron /></TextTool>
            <TextTool><IconSlot><EraserIcon /></IconSlot>Clear<Chevron /></TextTool>
          </Stack>
          <Big w={60} hover icon={<SortIcon />} top="Sort &amp;" bottom="Filter" drop />
          <Big w={60} icon={<FindIcon />} top="Find &amp;" bottom="Select" drop />
        </Group>
        <Group w={84} label="Analysis" left={6}>
          <Big w={74} icon={<AnalyzeIcon />} top="Analyze" bottom="Data" />
        </Group>
      </Ribbon>

      <FormulaBar>
        <Field $w={147}>
          <input aria-label="Name box" defaultValue="X3" />
          <FieldButton $w={28} aria-label="Named ranges"><Triangle dir="down" color="#777" /></FieldButton>
        </Field>
        <Grip><Dots /></Grip>
        <Field $w={159} $gap={4}>
          <FieldButton $w={52} aria-label="Cancel"><svg width="18" height="17" fill="none" stroke="#bdbdbd" strokeWidth="2"><path d="M1 1 17 16M17 1 1 16" /></svg></FieldButton>
          <FieldButton $w={52} aria-label="Enter"><svg width="19" height="16" fill="none" stroke="#c0c0c0" strokeWidth="3"><path d="m1 9 6 5L18 1" /></svg></FieldButton>
          <FieldButton $w={50} aria-label="Insert function"><Glyph $font={serif} $italic $size={24} $weight={700}>fx</Glyph></FieldButton>
        </Field>
        <Field $open><input aria-label="Formula" /></Field>
      </FormulaBar>

      <SheetArea><Worksheet /></SheetArea>

      <BottomBar>
        <SheetNav>
          <button aria-label="Previous sheet"><Triangle dir="left" color="#c0c0c0" /></button>
          <button aria-label="Next sheet"><Triangle dir="right" color="#c0c0c0" /></button>
        </SheetNav>
        <SheetTab>Sheet1</SheetTab>
        <AddSheet aria-label="New sheet"><svg width="24" height="24" fill="none" stroke="#808080"><circle cx="12" cy="12" r="11" strokeWidth="1.500" /><path d="M12 6v12M6 12h12" strokeWidth="2.200" /></svg></AddSheet>
        <ScrollGrip><Dots /></ScrollGrip>
        <ScrollBar><button aria-label="Scroll left"><Triangle dir="left" color="#666" /></button></ScrollBar>
      </BottomBar>
    </Page>
  );
}
